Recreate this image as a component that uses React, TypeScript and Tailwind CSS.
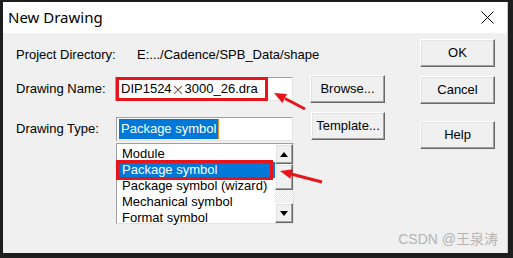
const BTN =
  "flex items-center justify-center bg-[#f0f0f0] text-[13px] text-black border border-t-white border-l-white border-r-[#696969] border-b-[#696969] shadow-[inset_-1px_-1px_0_#a0a0a0,inset_1px_1px_0_#e3e3e3]";

const FIELD =
  "bg-white border border-t-[#a0a0a0] border-l-[#a0a0a0] border-r-[#e3e3e3] border-b-[#e3e3e3]";

const ITEMS = ["Module", "Package symbol", "Package symbol (wizard)", "Mechanical symbol", "Format symbol"];

function ScrollArrow({ up }: { up?: boolean }) {
  return (
    <div className={`${BTN} h-[20px] w-full`}>
      <svg width="8" height="5" viewBox="0 0 8 5">
        <polygon points={up ? "4,0 8,5 0,5" : "0,0 8,0 4,5"} fill="#000" />
      </svg>
    </div>
  );
}

export default function App() {
  return (
    <div className="relative w-[513px] h-[258px] bg-[#1e1e1e] pt-[2px] pl-[3px] pr-[5px] pb-[5px] flex font-['Liberation_Sans',Arial,sans-serif] text-[13px] text-black">
      <div className="flex-1 flex flex-col bg-[#f0f0f0] border-r border-[#c8c8c8]">
        {/* Title bar */}
        <div className="h-[31px] bg-white flex items-center justify-between pl-[5px] pr-[13px]">
          <span className="font-['Noto_Sans',sans-serif] text-[15px] text-black">New Drawing</span>
          <svg width="13" height="13" viewBox="0 0 13 13">
            <path d="M0.5 0.5 L12.5 12.5 M12.5 0.5 L0.5 12.5" stroke="#000" strokeWidth="1" />
          </svg>
        </div>

        <div className="flex-1 flex">
          {/* Left part */}
          <div className="flex flex-col pl-[13px] pt-[14px]">
            <div className="h-[16px] flex items-center">
              <span className="w-[121px]">Project Directory:</span>
              <span>E:.../Cadence/SPB_Data/shape</span>
            </div>

            <div className="mt-[12px] h-[28px] flex items-center">
              <span className="w-[99px]">Drawing Name:</span>
              <div className={`${FIELD} w-[178px] h-[24px] flex items-center`}>
                <span className="w-[152px] h-[24px] flex items-center border-[3px] border-[#e8141b] pl-[2px] whitespace-nowrap">
                  DIP1524<span className="font-['Noto_Sans_CJK_SC',sans-serif] font-light">×</span>3000_26.dra
                </span>
              </div>
              <div className={`${BTN} ml-[17px] w-[75px] h-[28px]`}>Browse...</div>
            </div>

            <div className="mt-[9px] flex items-start">
              <span className="mt-[5px] w-[100px] h-[24px] flex items-center">Drawing Type:</span>
              <div className={`${FIELD} mt-[5px] w-[177px] h-[24px] flex items-center pl-[2px]`}>
                <span className="h-[20px] flex items-center bg-[#0078d7] text-white px-[2px]">Package symbol</span>
                <span className="w-[1px] h-[20px] bg-[#f08a24]" />
              </div>
              <div className={`${BTN} ml-[18px] w-[74px] h-[28px]`}>Template...</div>
            </div>

            {/* List box */}
            <div className={`${FIELD} relative ml-[100px] mt-[2px] w-[178px] h-[81px] flex`}>
              <div className="flex-1 pt-[2px]">
                {ITEMS.map((item, i) => (
                  <div
                    key={item}
                    className={`h-[16px] flex items-center pl-[5px] whitespace-nowrap ${
                      i === 1 ? "bg-[#0078d7] text-white" : ""
                    }`}
                  >
                    {item}
                  </div>
                ))}
              </div>
              <div className="w-[18px] flex flex-col">
                <ScrollArrow up />
                <div className={`${BTN} h-[26px] w-full`} />
                <div className="flex-1 bg-[repeating-conic-gradient(#ffffff_0_25%,#e6e6e6_0_50%)] bg-[length:2px_2px]" />
                <ScrollArrow />
              </div>
              {/* highlight annotation */}
              <div className="absolute left-[-1px] top-[16px] w-[157px] h-[20px] border-[3px] border-[#e8141b]" />
            </div>
          </div>

          {/* Right buttons */}
          <div className="flex flex-col ml-[35px] pt-[6px]">
            <div className={`${BTN} w-[75px] h-[28px] border-[#3a3a3a] border-t-[#3a3a3a] border-l-[#3a3a3a]`}>OK</div>
            <div className={`${BTN} mt-[9px] w-[75px] h-[28px]`}>Cancel</div>
            <div className={`${BTN} mt-[17px] w-[75px] h-[28px]`}>Help</div>
          </div>
        </div>
      </div>

      {/* Annotation arrows */}
      <svg className="absolute inset-0 pointer-events-none" width="513" height="258" viewBox="0 0 513 258">
        <line x1="305" y1="109" x2="285" y2="98.5" stroke="#e8141b" strokeWidth="3" />
        <polygon points="274,93 287,94.1 282.4,102.9" fill="#e8141b" />
        <line x1="322" y1="182" x2="291" y2="174" stroke="#e8141b" strokeWidth="3" />
        <polygon points="280,171 292.9,169.2 290.3,178.8" fill="#e8141b" />
      </svg>

      {/* Watermark */}
      <span className="absolute right-[15px] bottom-[8px] text-[14px] text-[#b4b4b4] font-['Liberation_Sans','Noto_Sans_CJK_SC',sans-serif]">
        CSDN @王泉涛
      </span>
    </div>
  );
}
